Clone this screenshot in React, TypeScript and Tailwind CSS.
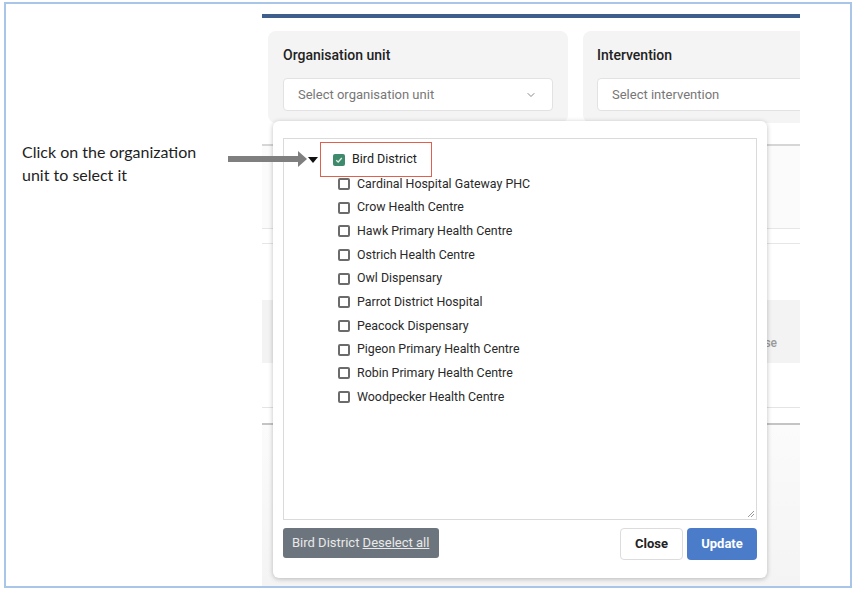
import { ChevronDown } from 'lucide-react';

const facilities = [
  'Cardinal Hospital Gateway PHC',
  'Crow Health Centre',
  'Hawk Primary Health Centre',
  'Ostrich Health Centre',
  'Owl Dispensary',
  'Parrot District Hospital',
  'Peacock Dispensary',
  'Pigeon Primary Health Centre',
  'Robin Primary Health Centre',
  'Woodpecker Health Centre',
];

const Box = () => (
  <span className="w-[12px] h-[12px] border-2 border-[#6b6b6b] rounded-[2px] bg-white shrink-0" />
);

export default function App() {
  return (
    <div className="w-[856px] h-[592px] bg-white relative overflow-hidden font-['Roboto',sans-serif]">
      {/* document frame */}
      <div className="ml-[4px] mt-[2px] w-[848px] h-[586px] border-2 border-[#a9c6e8] flex">
        {/* annotation text */}
        <div className="w-[256px] pl-[16px] pt-[137px] font-['Lato',sans-serif] text-[16px] leading-[22.5px] text-[#1e1e1e]">
          <p>Click on the organization</p>
          <p>unit to select it</p>
        </div>

        {/* app screenshot */}
        <div className="w-[538px] h-full relative overflow-hidden flex flex-col">
          <div className="h-[10px] bg-white" />
          <div className="h-[4px] bg-[#3e5f8b]" />
          <div className="flex gap-[15px] pl-[6px] pt-[13px] bg-white">
            <div className="w-[300px] h-[92px] shrink-0 rounded-lg bg-[#f4f4f4] px-[15px] pt-[14px]">
              <p className="text-[14px] leading-[20px] font-medium text-[#222]">Organisation unit</p>
              <div className="mt-[13px] h-[33px] bg-white border border-[#e2e2e2] rounded flex items-center justify-between pl-[14px] pr-[15px]">
                <span className="text-[13px] text-[#777]">Select organisation unit</span>
                <ChevronDown size={12} className="text-[#888]" />
              </div>
            </div>
            <div className="w-[300px] h-[92px] shrink-0 rounded-lg bg-[#f4f4f4] px-[14px] pt-[14px]">
              <p className="text-[14px] leading-[20px] font-medium text-[#222]">Intervention</p>
              <div className="mt-[13px] h-[33px] bg-white border border-[#e2e2e2] rounded flex items-center pl-[14px]">
                <span className="text-[13px] text-[#777]">Select intervention</span>
              </div>
            </div>
          </div>

          {/* page content behind the popup */}
          <div className="h-[21px] bg-white" />
          <div className="h-[2px] bg-[#d6d6d6]" />
          <div className="h-[82px] bg-[#fbfbfb]" />
          <div className="h-[1px] bg-[#e6e6e6]" />
          <div className="h-[14px] bg-white" />
          <div className="h-[1px] bg-[#e6e6e6]" />
          <div className="h-[56px] bg-white" />
          <div className="h-[63px] bg-[#f3f3f3] pl-[462px] pt-[13px] text-[12px] leading-[20px] text-[#9a9a9a] font-medium">
            <p className="text-[#cfcfcf]">Date of</p>
            <p>Response</p>
          </div>
          <div className="h-[44px] bg-white" />
          <div className="h-[1px] bg-[#e4e4e4]" />
          <div className="h-[15px] bg-white" />
          <div className="h-[2px] bg-[#c4c4c4]" />
          <div className="flex-1 bg-gradient-to-b from-[#fbfbfb] to-[#f4f4f4]" />

          {/* org unit popup */}
          <div className="absolute left-[11px] top-[117px] w-[494px] h-[457px] bg-white rounded-md shadow-[0_1px_5px_rgba(0,0,0,0.25)] px-[10px] pt-[17px]">
            <div className="h-[382px] border border-[#dadada] relative pt-[3px]">
              <div className="flex items-center h-[35px]">
                <span className="ml-[24px] w-0 h-0 border-l-[5px] border-r-[5px] border-t-[6px] border-l-transparent border-r-transparent border-t-[#111]" />
                <div className="ml-[2px] w-[112px] h-[35px] border-[1.5px] border-[#e0604e] flex items-center pl-[12px]">
                  <span className="w-[12px] h-[12px] rounded-[2px] bg-[#3f8a6d] flex items-center justify-center">
                    <svg width="8" height="8" viewBox="0 0 8 8">
                      <path d="M1.2 4.2 L3.2 6 L6.8 2" stroke="#dff0e8" strokeWidth="1.3" fill="none" />
                    </svg>
                  </span>
                  <span className="ml-[7px] text-[12.5px] text-[#222]">Bird District</span>
                </div>
              </div>
              <div className="-mt-[5px]">
                {facilities.map((f) => (
                  <div key={f} className="h-[23.7px] flex items-center pl-[54px]">
                    <Box />
                    <span className="ml-[7px] text-[12.4px] text-[#2a2a2a]">{f}</span>
                  </div>
                ))}
              </div>
              <svg className="absolute right-[1px] bottom-[1px]" width="8" height="8" viewBox="0 0 8 8">
                <path d="M7 1 L1 7 M7 4 L4 7" stroke="#999" strokeWidth="1" />
              </svg>
            </div>
            <div className="mt-[8px] flex items-start justify-between">
              <div className="h-[30px] w-[156px] bg-[#6c757d] rounded-[3px] flex items-center pl-[9px] text-[13px] text-[#e9e9e9]">
                Bird District&nbsp;<span className="underline">Deselect all</span>
              </div>
              <div className="flex gap-[4px]">
                <div className="h-[32px] w-[63px] border border-[#dcdcdc] rounded bg-white flex items-center justify-center text-[13px] font-bold text-[#222]">
                  Close
                </div>
                <div className="h-[32px] w-[70px] rounded bg-[#4a7cc9] flex items-center justify-center text-[13px] font-bold text-white">
                  Update
                </div>
              </div>
            </div>
          </div>
        </div>
      </div>

      {/* annotation arrow */}
      <svg className="absolute left-[228px] top-[150px]" width="82" height="18" viewBox="0 0 82 18">
        <rect x="0" y="6" width="72" height="6" fill="#7f7f7f" />
        <path d="M70 1 L79 9 L70 17 Z" fill="#7f7f7f" />
      </svg>
    </div>
  );
}
